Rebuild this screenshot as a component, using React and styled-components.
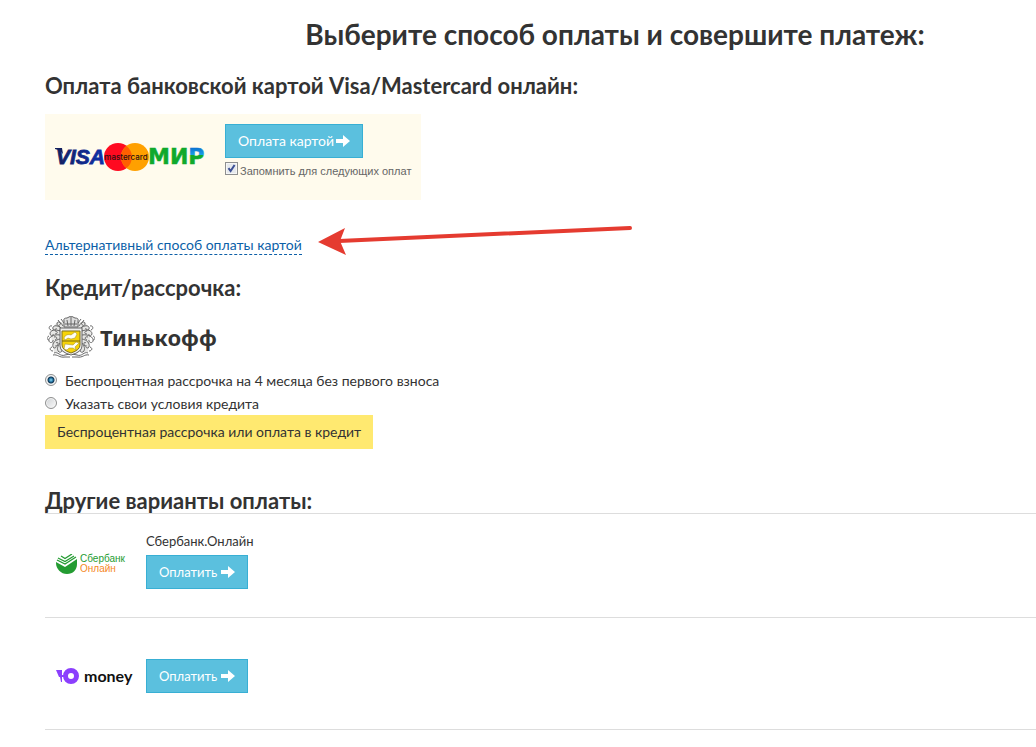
import React from 'react';
import styled, { createGlobalStyle } from 'styled-components';

const GlobalStyle = createGlobalStyle`
  * { box-sizing: border-box; }
  body {
    margin: 0;
    background: #fff;
    color: #333;
    font-family: Lato, Roboto, sans-serif;
    font-size: 14px;
    line-height: 20px;
    overflow-x: hidden;
  }
`;

const Page = styled.main`
  padding: 14px 0 16px 45px;
`;

const Title = styled.h1`
  margin: 0;
  padding-left: 149px;
  text-align: center;
  font-size: 28px;
  line-height: 40px;
  font-weight: 700;
`;

const Heading = styled.h2`
  margin: 0;
  font-size: 22px;
  line-height: 24px;
  font-weight: 700;
`;

const Section = styled.section`
  margin-top: ${(p) => p.$gap}px;
`;

const CardPanel = styled.form`
  display: inline-flex;
  align-items: flex-start;
  gap: 20px;
  margin-top: 16px;
  padding: 10px 10px 20px;
  background: #fffbed;
`;

const CardLogos = styled.svg`
  display: block;
  width: 150px;
  height: 30px;
  margin-top: 18px;
  overflow: visible;
`;

const CardActions = styled.div`
  display: flex;
  flex-direction: column;
  align-items: flex-start;
  min-height: 56px;
`;

const PayButton = styled.button`
  display: inline-flex;
  align-items: center;
  gap: ${(p) => (p.$large ? 2 : 4)}px;
  height: 34px;
  padding: 0 12px;
  border: 1px solid #38afd4;
  background: #5bc0de;
  color: #fff;
  font: inherit;
  font-size: ${(p) => (p.$large ? 14 : 13)}px;
  white-space: nowrap;
  cursor: pointer;
`;

const ArrowIcon = styled.svg`
  width: 14px;
  height: 12px;
  fill: currentColor;
`;

const RememberLabel = styled.label`
  display: flex;
  align-items: center;
  gap: 2px;
  margin-top: 4px;
  color: #666;
  font-family: "Liberation Sans", sans-serif;
  font-size: 11px;
  line-height: 16px;
  white-space: nowrap;
`;

const Checkbox = styled.input`
  appearance: none;
  width: 13px;
  height: 13px;
  margin: 0 0 4px;
  border: 1px solid #8e8f8f;
  background: #e6e9ed;
  box-shadow: inset 0 0 0 1px #f6f6f6;
  &:checked {
    background: #e6e9ed url("data:image/svg+xml,%3Csvg xmlns='http://www.w3.org/2000/svg' viewBox='0 0 11 11'%3E%3Cpath d='M2.5 5.2 4.6 8 8.6 2' fill='none' stroke='%233c4f94' stroke-width='2'/%3E%3C/svg%3E");
  }
`;

const AltRow = styled.div`
  display: flex;
  align-items: flex-start;
  gap: 15px;
  height: 32px;
  margin-top: 26px;
`;

const AltLink = styled.a`
  margin-top: 10px;
  border-bottom: 1px dashed #0c5fa8;
  color: #0c5fa8;
  line-height: 18px;
  text-decoration: none;
  white-space: nowrap;
`;

const RedArrow = styled.svg`
  width: 316px;
  height: 32px;
  flex: none;
`;

const BankLogo = styled.div`
  display: flex;
  align-items: center;
  gap: 5px;
  margin: 16px 0 0 2px;
  color: #333;
  font-family: "Noto Sans", sans-serif;
  font-size: 22px;
  line-height: 42px;
  font-weight: 700;
`;

const Crest = styled.svg`
  width: 48px;
  height: 42px;
`;

const Options = styled.div`
  display: flex;
  flex-direction: column;
  margin-top: 11px;
`;

const Option = styled.label`
  display: flex;
  align-items: center;
  gap: 8px;
  height: 23px;
`;

const Radio = styled.input`
  appearance: none;
  width: 12px;
  height: 12px;
  margin: 0 0 1px;
  border: 1px solid #8e8f8f;
  border-radius: 50%;
  background: linear-gradient(135deg, #cfd2d5, #fafafa);
  box-shadow: inset 0 0 0 1px #f4f4f4;
  &:checked {
    background: radial-gradient(circle at 5px 5px, #8fdcf5 0, #1f6f9f 2px, #12344f 3px, #eef1f3 4px);
  }
`;

const CreditButton = styled.button`
  align-self: flex-start;
  height: 34px;
  padding: 0 12px;
  border: 0;
  background: #ffe970;
  color: #333;
  font: inherit;
  white-space: nowrap;
  cursor: pointer;
`;

const Methods = styled.ul`
  margin: 0;
  padding: 0;
  list-style: none;
`;

const Method = styled.li`
  display: flex;
  align-items: center;
  height: ${(p) => p.$height}px;
  padding-top: ${(p) => p.$top || 0}px;
  padding-bottom: ${(p) => p.$bottom || 0}px;
  border-top: 1px solid #ddd;
  &:last-child { border-bottom: 1px solid #ddd; }
`;

const MethodLogo = styled.div`
  display: flex;
  align-items: center;
  gap: ${(p) => p.$gap}px;
  width: 101px;
  padding-left: 11px;
  padding-top: ${(p) => p.$top || 0}px;
`;

const MethodBody = styled.div`
  display: flex;
  flex-direction: column;
  align-items: flex-start;
`;

const MethodName = styled.span`
  margin-bottom: 4px;
  font-size: 13px;
`;

const SberText = styled.span`
  display: flex;
  flex-direction: column;
  color: #249c32;
  font-family: "Liberation Sans", sans-serif;
  font-size: 10px;
  line-height: 10px;
`;

const Orange = styled.span`
  color: #f58a1f;
`;

const MoneyText = styled.span`
  color: #111;
  font-size: 16px;
  font-weight: 700;
`;

const Icon = styled.svg`
  flex: none;
`;

function Arrow() {
  return (
    <ArrowIcon viewBox="0 0 14 12" aria-hidden="true">
      <path d="M0 4h7V0l7 6-7 6V8H0z" />
    </ArrowIcon>
  );
}

function PaymentLogos() {
  return (
    <CardLogos viewBox="0 0 150 30" role="img" aria-label="Visa, Mastercard, МИР">
      <defs>
        <linearGradient id="visa" x1="0" x2="1">
          <stop offset="0" stopColor="#12205f" />
          <stop offset="1" stopColor="#0f30ac" />
        </linearGradient>
        <linearGradient id="mir" gradientUnits="userSpaceOnUse" x1="0" y1="6" x2="0" y2="22">
          <stop offset="0" stopColor="#0b72d0" />
          <stop offset="0.45" stopColor="#1aa3e8" />
          <stop offset="0.45" stopColor="#10a92c" />
        </linearGradient>
      </defs>
      <path d="M0 6h7l1 6Q5 8 0 7z" fill="#12205f" />
      <text x="1" y="22" fill="url(#visa)" stroke="url(#visa)" strokeWidth="0.800" fontFamily="Liberation Sans" fontSize="21" fontWeight="700" fontStyle="italic">VISA</text>
      <circle cx="63" cy="15" r="14" fill="#ff0a20" />
      <circle cx="80" cy="15" r="14" fill="#ffa000" />
      <path d="M71.500 3.900a14 14 0 0 1 0 22.200a14 14 0 0 1 0-22.200" fill="#ff5f00" />
      <text x="71" y="18" textAnchor="middle" fill="#2b1010" fontFamily="Inter" fontSize="8" fontWeight="500">mastercard</text>
      <text x="93" y="22" fill="#10a92c" stroke="#10a92c" strokeWidth="0.500" fontFamily="DejaVu Sans" fontSize="22" fontWeight="700">
        МИ<tspan fill="url(#mir)" stroke="url(#mir)">Р</tspan>
      </text>
    </CardLogos>
  );
}

function CrestHalf() {
  return (
    <g fill="none" stroke="#666" strokeWidth="1">
      <path d="M16 10c-3-5-6-5-6-2 0 2 3 2 3 0M14 12c-5-4-9-2-8 1 1 2 4 1 3-1M13 15c-5-2-10-1-10 3 1 3 4 2 3 0M13 19c-6-1-12 2-11 6 1 3 5 1 4-1M13 23c-5 1-8 4-7 8 1 2 4 1 3-2M13 27c-2 3-4 6-1 9 2 1 4-1 2-3M8 15c3 0 3 3 0 3M7 21c3-1 4 2 1 3M9 27c2-2 3 1 1 3M12 10c2 1 2 4 0 5M4 14c-3-1-2-5 1-4M2 20c-3 1-2 4 0 4M5 31c-3 1-2 4 1 4" />
      <path d="M7 37c4-2 6 4 11 2l5-1M6 39c5-1 6 3 12 2h5M14 8l-3-4M17 7l-3-4" />
    </g>
  );
}

function TinkoffCrest() {
  return (
    <Crest viewBox="0 0 48 42" aria-hidden="true">
      <path d="M10 6h28l6 10-3 20H7L3 16z" fill="#e6e6e4" />
      <CrestHalf />
      <g transform="translate(48 0) scale(-1 1)"><CrestHalf /></g>
      <path d="M17 11V5q-1-3 3-3l4-2 4 2q4 0 3 3v6z" fill="#ddd" stroke="#666" />
      <path d="M20 4l1 6M24 1v9M28 4l-1 6M18 8h12" stroke="#666" fill="none" />
      <path d="M13 12h22v18q0 6-11 9-11-3-11-9z" fill="#eee" stroke="#666" />
      <path d="M15 15h18v14q0 5-9 8-9-3-9-8z" fill="#f7d408" stroke="#807020" />
      <path d="M15 25h18" stroke="#77660e" />
      <path d="M17 22c1-3 4-4 7-3l4-3 2 2-2 4-4 1-3-1-3 2zM17 33l1-5 8 1 3-3 3 1-4 4 1 3-3-2-4 0-2 2z" fill="#fffef4" stroke="#9b8931" strokeWidth=".5" />
    </Crest>
  );
}

export default function App() {
  return (
    <>
      <GlobalStyle />
      <Page>
        <Title>Выберите способ оплаты и совершите платеж:</Title>

        <Section $gap={20}>
          <Heading>Оплата банковской картой Visa/Mastercard онлайн:</Heading>
          <CardPanel onSubmit={(e) => e.preventDefault()}>
            <PaymentLogos />
            <CardActions>
              <PayButton type="submit" $large>Оплата картой <Arrow /></PayButton>
              <RememberLabel>
                <Checkbox type="checkbox" defaultChecked />
                Запомнить для следующих оплат
              </RememberLabel>
            </CardActions>
          </CardPanel>
          <AltRow>
            <AltLink href="#alternative">Альтернативный способ оплаты картой</AltLink>
            <RedArrow viewBox="0 0 316 32" aria-hidden="true">
              <path d="M22 15L313 2" stroke="#e53b30" strokeWidth="4" strokeLinecap="round" />
              <path d="M1 16L28 2l-5 13 6 14z" fill="#e53b30" />
            </RedArrow>
          </AltRow>
        </Section>

        <Section $gap={18}>
          <Heading>Кредит/рассрочка:</Heading>
          <BankLogo><TinkoffCrest />Тинькофф</BankLogo>
          <Options>
            <Option>
              <Radio type="radio" name="credit" defaultChecked />
              Беспроцентная рассрочка на 4 месяца без первого взноса
            </Option>
            <Option>
              <Radio type="radio" name="credit" />
              Указать свои условия кредита
            </Option>
            <CreditButton type="button">Беспроцентная рассрочка или оплата в кредит</CreditButton>
          </Options>
        </Section>

        <Section $gap={40}>
          <Heading>Другие варианты оплаты:</Heading>
          <Methods>
            <Method $height={104} $bottom={12}>
              <MethodLogo $gap={3} $top={8}>
                <Icon width="21" height="20" viewBox="0 0 21 20" aria-hidden="true">
                  <path d="M0 8l9 5L21 5v5c0 6-4 10-10 10S0 15 0 9z" fill="#249c32" />
                  <path d="M1 6l8 4L20 3M2 4l7 3.500L18 2M5 2l4 2.500L16 0" fill="none" stroke="#249c32" strokeWidth="1.300" />
                </Icon>
                <SberText>Сбербанк<Orange>Онлайн</Orange></SberText>
              </MethodLogo>
              <MethodBody>
                <MethodName>Сбербанк.Онлайн</MethodName>
                <PayButton type="button">Оплатить<Arrow /></PayButton>
              </MethodBody>
            </Method>
            <Method $height={113} $top={4}>
              <MethodLogo $gap={5}>
                <Icon width="23" height="16" viewBox="0 0 23 16" aria-hidden="true">
                  <path d="M0 2h6v12H5L4 9H3z" fill="#8b3ffd" />
                  <path fillRule="evenodd" d="M15 0a8 8 0 1 0 0 16a8 8 0 1 0 0-16m0 5a3 3 0 1 1 0 6a3 3 0 1 1 0-6" fill="#8b3ffd" />
                  <path d="M5 7h3v2H5z" fill="#8b3ffd" />
                </Icon>
                <MoneyText>money</MoneyText>
              </MethodLogo>
              <MethodBody>
                <PayButton type="button">Оплатить<Arrow /></PayButton>
              </MethodBody>
            </Method>
          </Methods>
        </Section>
      </Page>
    </>
  );
}
